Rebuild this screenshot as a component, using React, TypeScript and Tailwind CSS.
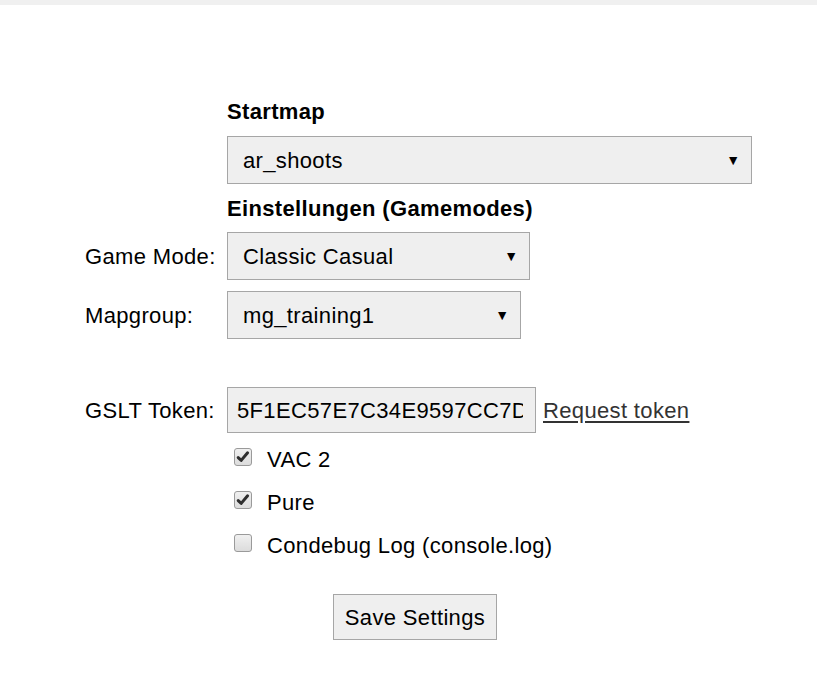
import React from "react";

const font = { fontFamily: '"Liberation Sans", Arial, sans-serif' };

function Select({ value, width, height }: { value: string; width: string; height: string }) {
  return (
    <div
      className={`${width} ${height} flex items-center justify-between border border-[#a6a6a6] bg-[#efefef] pl-[15px] pr-[11px] text-[22px] tracking-[0.35px] text-black`}
    >
      <span>{value}</span>
      <span className="text-[14px] leading-none tracking-normal">▼</span>
    </div>
  );
}

function Checkbox({ checked, label }: { checked: boolean; label: string }) {
  return (
    <div className="flex h-[43px] items-center">
      <div className="relative mb-[5px] ml-[7px] h-[18px] w-[18px] rounded-[3px] border border-[#9a9a9a] bg-gradient-to-b from-[#f0f0f0] to-[#dcdcdc]">
        {checked && (
          <svg className="absolute left-[-1px] top-[-1px]" width="18" height="18" viewBox="0 0 18 18">
            <path d="M4.2 9.6 L7.2 12.4 L13.6 4.8" fill="none" stroke="#2e2e2e" strokeWidth="3" strokeLinejoin="round" strokeLinecap="round" />
          </svg>
        )}
      </div>
      <span className="ml-[15px] text-[22px] tracking-[0.35px] text-black">{label}</span>
    </div>
  );
}

export default function App() {
  return (
    <div className="min-h-[685px] w-full bg-white" style={font}>
      <div className="h-[5px] bg-[#f0f0f0]" />
      <div className="pl-[85px]">
        <div className="ml-[142px] mt-[95px] h-[24px] text-[22px] font-bold leading-[24px] tracking-[0.35px] text-black">Startmap</div>
        <div className="ml-[142px] mt-[12px]">
          <Select value="ar_shoots" width="w-[525px]" height="h-[48px]" />
        </div>
        <div className="ml-[142px] mt-[13px] h-[24px] text-[22px] font-bold leading-[24px] tracking-[0.35px] text-black">
          Einstellungen (Gamemodes)
        </div>
        <div className="mt-[11px] flex items-center">
          <div className="w-[142px] text-[22px] tracking-[0.35px] text-black">Game Mode:</div>
          <Select value="Classic Casual" width="w-[303px]" height="h-[48px]" />
        </div>
        <div className="mt-[11px] flex items-center">
          <div className="w-[142px] text-[22px] tracking-[0.35px] text-black">Mapgroup:</div>
          <Select value="mg_training1" width="w-[294px]" height="h-[48px]" />
        </div>
        <div className="mt-[48px] flex items-center">
          <div className="w-[142px] text-[22px] tracking-[0.35px] text-black">GSLT Token:</div>
          <div className="flex h-[46px] w-[309px] shrink-0 items-center overflow-hidden whitespace-nowrap border border-[#a6a6a6] bg-[#efefef] pl-[9px] text-[22px] tracking-[0.35px] text-black">
            <span className="block w-[286px] overflow-hidden">5F1EC57E7C34E9597CC7D4A1B2C3D4E5</span>
          </div>
          <a className="ml-[7px] whitespace-nowrap text-[22px] tracking-[0.35px] text-[#333] underline underline-offset-[3px]" href="#">
            Request token
          </a>
        </div>
        <div className="ml-[142px] mt-[5px]">
          <Checkbox checked label="VAC 2" />
          <Checkbox checked label="Pure" />
          <Checkbox checked={false} label="Condebug Log (console.log)" />
        </div>
        <div className="ml-[248px] mt-[27px] flex h-[46px] w-[164px] items-center justify-center border border-[#a6a6a6] bg-[#efefef] text-[22px] tracking-[0.35px] text-black">
          Save Settings
        </div>
      </div>
    </div>
  );
}
